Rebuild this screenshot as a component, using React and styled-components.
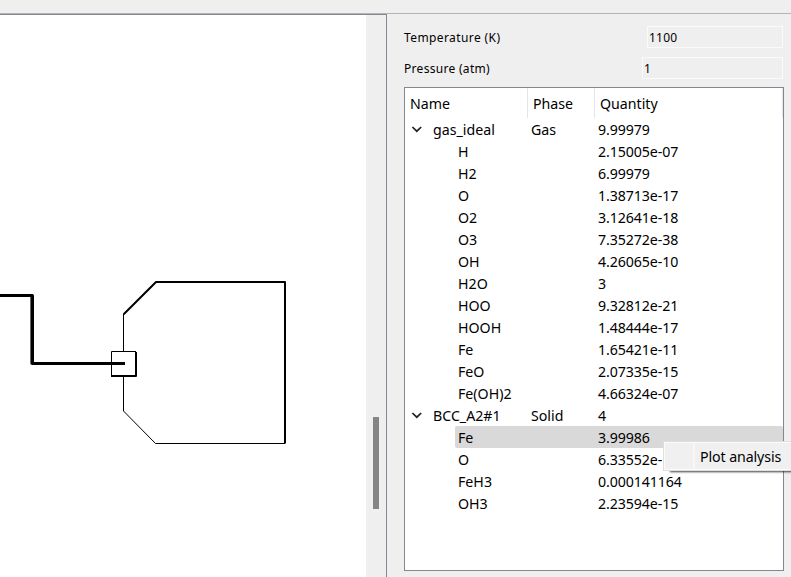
import React from "react";
import styled, { createGlobalStyle } from "styled-components";

const GlobalStyle = createGlobalStyle`
  * { box-sizing: border-box; }
  html, body { margin: 0; overflow: hidden; background: #efefef; }
  body { font-family: "Noto Sans", "Open Sans", sans-serif; color: #000; }
`;

const Window = styled.div`
  position: relative;
  width: 791px;
  height: 577px;
  display: flex;
  flex-direction: column;
  overflow: hidden;
  background: #efefef;
`;

const TopStrip = styled.div`
  flex: none;
  height: 14px;
  border-bottom: 1px solid #b4b4b4;
`;

const Body = styled.div`
  flex: 1;
  min-height: 0;
  display: flex;
`;

const CanvasFrame = styled.section`
  width: 387px;
  display: flex;
  border-top: 1px solid #828790;
  border-right: 1px solid #828790;
`;

const Drawing = styled.svg`
  display: block;
  width: 366px;
  height: 562px;
  background: #fff;
`;

const ScrollTrack = styled.div`
  flex: 1;
  padding: 402px 0 0 7px;
`;

const ScrollThumb = styled.div`
  width: 6px;
  height: 92px;
  background: #858585;
`;

const SidePanel = styled.aside`
  flex: none;
  width: 397px;
  padding: 12px 0 0 17px;
  display: flex;
  flex-direction: column;
`;

const Field = styled.label`
  display: flex;
  align-items: center;
  justify-content: space-between;
  width: 379px;
  height: 22px;
  margin-bottom: 9px;
  font-size: 12px;
  letter-spacing: ${(p) => p.$spacing}px;
  white-space: nowrap;
`;

const FieldValue = styled.output`
  width: ${(p) => p.$width}px;
  height: 22px;
  padding-left: 1px;
  border: 1px solid #fafafa;
  font-size: 12px;
  line-height: 22px;
  letter-spacing: 0.2px;
`;

const Tree = styled.div`
  width: 380px;
  height: 484px;
  margin-top: -1px;
  background: #fff;
  border: 1px solid #828790;
  font-size: 14.2px;
  white-space: nowrap;
`;

const Header = styled.div`
  display: flex;
  height: 30px;
`;

const HeaderCell = styled.div`
  width: ${(p) => p.$width}px;
  padding-left: 5px;
  border-right: 1px solid #e5e5e5;
  line-height: 31px;
`;

const Row = styled.div`
  display: flex;
  height: 22px;
  margin-left: ${(p) => (p.$child ? 50 : 0)}px;
  padding-left: ${(p) => (p.$child ? 3 : 6)}px;
  background: ${(p) => (p.$selected ? "#d9d9d9" : "transparent")};
  border-radius: 2px;
  line-height: 23px;
`;

const Name = styled.div`
  display: flex;
  width: ${(p) => (p.$child ? 73 : 120)}px;
`;

const Phase = styled.div`
  width: 67px;
`;

const Amount = styled.span`
  letter-spacing: -0.1px;
`;

const Arrow = styled.svg`
  width: 12px;
  height: 22px;
  margin-right: 10px;
  fill: none;
  stroke: #222;
  stroke-width: 1.7;
`;

const ContextMenu = styled.div`
  position: absolute;
  left: 663px;
  top: 441px;
  width: 140px;
  height: 30px;
  padding: 1px 2px;
  display: flex;
  background: #f0f0f0;
  border: 1px solid #dedede;
  box-shadow: inset 0 0 0 1px #fbfbfb, 6px 2px 2px -1px rgba(0, 0, 0, 0.75);
  font-size: 14.2px;
  line-height: 27px;
`;

const IconGutter = styled.div`
  width: 29px;
  border-right: 2px solid #f7f7f7;
`;

const MenuItem = styled.div`
  padding-left: 5px;
  letter-spacing: -0.1px;
  white-space: nowrap;
`;

const phases = [
  {
    name: "gas_ideal",
    phase: "Gas",
    amount: "9.99979",
    species: [
      ["H", "2.15005e-07"],
      ["H2", "6.99979"],
      ["O", "1.38713e-17"],
      ["O2", "3.12641e-18"],
      ["O3", "7.35272e-38"],
      ["OH", "4.26065e-10"],
      ["H2O", "3"],
      ["HOO", "9.32812e-21"],
      ["HOOH", "1.48444e-17"],
      ["Fe", "1.65421e-11"],
      ["FeO", "2.07335e-15"],
      ["Fe(OH)2", "4.66324e-07"],
    ],
  },
  {
    name: "BCC_A2#1",
    phase: "Solid",
    amount: "4",
    selected: "Fe",
    species: [
      ["Fe", "3.99986"],
      ["O", "6.33552e-16"],
      ["FeH3", "0.000141164"],
      ["OH3", "2.23594e-15"],
    ],
  },
];

function FlowDrawing() {
  return (
    <Drawing viewBox="0 15 366 562" fill="none" stroke="#000">
      <path d="M123.5 314V411L155.5 443.5H285" strokeWidth="1" />
      <path d="M123.7 314.3L156 282H285V443.5" strokeWidth="2" strokeLinejoin="round" />
      <path d="M111 351H137V377H111Z" fill="#fff" stroke="none" />
      <path d="M111.5 377V351.5H136" strokeWidth="1" />
      <path d="M136 352V376H111" strokeWidth="2" strokeLinejoin="round" />
      <path d="M0 295.5H32.5" strokeWidth="3" />
      <path d="M32.2 295.7V363.3" strokeWidth="3.6" strokeLinecap="round" />
      <path d="M32 363.5H125" strokeWidth="3" />
    </Drawing>
  );
}

function PhaseGroup({ group }) {
  return (
    <>
      <Row>
        <Name>
          <Arrow viewBox="0 0 12 22">
            <path d="M1.4 9L5.8 13.2L10.2 9" />
          </Arrow>
          <span>{group.name}</span>
        </Name>
        <Phase>{group.phase}</Phase>
        <Amount>{group.amount}</Amount>
      </Row>
      {group.species.map(([name, amount]) => (
        <Row key={name} $child $selected={group.selected === name}>
          <Name $child>{name}</Name>
          <Phase />
          <Amount>{amount}</Amount>
        </Row>
      ))}
    </>
  );
}

export default function App() {
  return (
    <Window>
      <GlobalStyle />
      <TopStrip />
      <Body>
        <CanvasFrame>
          <FlowDrawing />
          <ScrollTrack>
            <ScrollThumb />
          </ScrollTrack>
        </CanvasFrame>
        <SidePanel>
          <Field $spacing={0.4}>
            Temperature (K)
            <FieldValue $width={136}>1100</FieldValue>
          </Field>
          <Field $spacing={0.3}>
            Pressure (atm)
            <FieldValue $width={141}>1</FieldValue>
          </Field>
          <Tree>
            <Header>
              <HeaderCell $width={123}>Name</HeaderCell>
              <HeaderCell $width={67}>Phase</HeaderCell>
              <HeaderCell $width={188}>Quantity</HeaderCell>
            </Header>
            {phases.map((group) => (
              <PhaseGroup key={group.name} group={group} />
            ))}
          </Tree>
        </SidePanel>
      </Body>
      <ContextMenu>
        <IconGutter />
        <MenuItem>Plot analysis</MenuItem>
      </ContextMenu>
    </Window>
  );
}
